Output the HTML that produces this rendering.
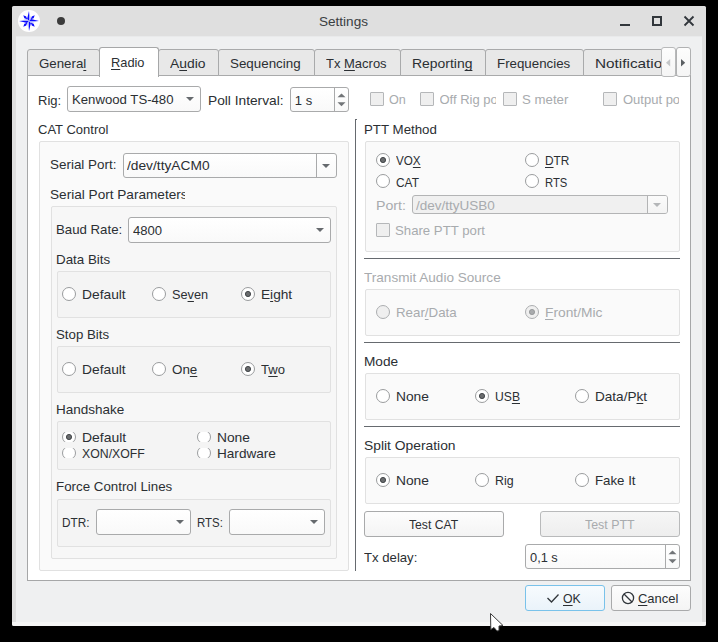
<!DOCTYPE html><html><head><meta charset="utf-8"><style>
html,body{margin:0;padding:0;background:#000;width:718px;height:642px;overflow:hidden}
.b{position:absolute;box-sizing:border-box}
svg.b{overflow:visible}
.t{position:absolute;font-family:"Liberation Sans",sans-serif;font-size:13px;line-height:15px;white-space:nowrap}
u{text-decoration:underline;text-underline-offset:2px;text-decoration-skip-ink:none}
</style></head><body>
<div class="b" style="left:12px;top:6px;width:694px;height:620px;background:#dfdfdf;border-radius:1.5px;"></div>
<div class="b" style="left:12px;top:622px;width:694px;height:4px;background:#f6f6f6;border-radius:0 0 3px 3px;"></div>
<div class="b" style="left:16px;top:36px;width:686px;height:586px;background:#eff0f1;"></div>
<div class="b" style="left:16px;top:36px;width:686px;height:1px;background:#e9eaeb;"></div>
<svg class="b" style="left:18px;top:10px" width="22" height="22" viewBox="0 0 22 22"><circle cx="11" cy="11" r="11" fill="#fff"/><path d="M11 1L9.1 9.1L11 11Z M21 11L12.9 9.1L11 11Z M11 21L12.9 12.9L11 11Z M1 11L9.1 12.9L11 11Z" fill="#0a0aff"/><path d="M11 1L12.9 9.1L11 11Z M21 11L12.9 12.9L11 11Z M11 21L9.1 12.9L11 11Z M1 11L9.1 9.1L11 11Z" fill="#a9aeff"/><path d="M5.3 5.3L8.2 6.4L9.2 9.2L6.4 8.2Z M16.7 5.3L15.6 8.2L12.8 9.2L13.8 6.4Z M16.7 16.7L13.8 15.6L12.8 12.8L15.6 13.8Z M5.3 16.7L6.4 13.8L9.2 12.8L8.2 15.6Z" fill="#0a0aff"/></svg>
<div class="b" style="left:57px;top:17px;width:8px;height:8px;border-radius:50%;background:#3b3b3b"></div>
<div class="t" style="left:318.50px;top:14px;color:#3a3e42;transform:scaleX(1.0426);transform-origin:0 0;">Settings</div>
<div class="b" style="left:620px;top:24px;width:10px;height:2px;background:#31363b"></div>
<div class="b" style="left:652px;top:16px;width:10px;height:10px;border:2px solid #31363b"></div>
<svg class="b" style="left:684px;top:16px" width="10" height="10" viewBox="0 0 10 10"><path d="M0.5 0.5L9.5 9.5M9.5 0.5L0.5 9.5" stroke="#31363b" stroke-width="1.8"/></svg>
<div class="b" style="left:27px;top:75px;width:664px;height:506px;background:#ffffff;border:1px solid #a6a7a8;"></div>
<div class="b" style="left:27px;top:49px;width:73px;height:27px;background:#e8e8e8;border:1px solid #a9aaab;border-radius:3px 3px 0 0;"></div>
<div class="b" style="left:158px;top:49px;width:61px;height:27px;background:#e8e8e8;border:1px solid #a9aaab;border-radius:3px 3px 0 0;"></div>
<div class="b" style="left:218px;top:49px;width:97px;height:27px;background:#e8e8e8;border:1px solid #a9aaab;border-radius:3px 3px 0 0;"></div>
<div class="b" style="left:314px;top:49px;width:87px;height:27px;background:#e8e8e8;border:1px solid #a9aaab;border-radius:3px 3px 0 0;"></div>
<div class="b" style="left:400px;top:49px;width:86px;height:27px;background:#e8e8e8;border:1px solid #a9aaab;border-radius:3px 3px 0 0;"></div>
<div class="b" style="left:485px;top:49px;width:99px;height:27px;background:#e8e8e8;border:1px solid #a9aaab;border-radius:3px 3px 0 0;"></div>
<div class="b" style="left:583px;top:49px;width:98px;height:27px;background:#e8e8e8;border:1px solid #a9aaab;border-radius:3px 3px 0 0;"></div>
<div class="t" style="left:38.89px;top:55.5px;color:#2b2f33;transform:scaleX(1.0217);transform-origin:0 0;">Genera<u>l</u></div>
<div class="b" style="left:99px;top:47px;width:60px;height:30px;background:#ffffff;border:1px solid #a6a7a8;border-radius:3px 3px 0 0;border-bottom:none;"></div>
<div class="t" style="left:111.21px;top:54.8px;color:#2b2f33;transform:scaleX(0.9853);transform-origin:0 0;"><u>R</u>adio</div>
<div class="t" style="left:170.20px;top:55.5px;color:#2b2f33;transform:scaleX(1.0697);transform-origin:0 0;">A<u>u</u>dio</div>
<div class="t" style="left:230.00px;top:55.5px;color:#2b2f33;transform:scaleX(1.0290);transform-origin:0 0;">Sequencing</div>
<div class="t" style="left:326.40px;top:55.5px;color:#2b2f33;transform:scaleX(0.9984);transform-origin:0 0;">Tx <u>M</u>acros</div>
<div class="t" style="left:412.00px;top:55.5px;color:#2b2f33;transform:scaleX(1.0714);transform-origin:0 0;">Reportin<u>g</u></div>
<div class="t" style="left:497.09px;top:55.5px;color:#2b2f33;transform:scaleX(1.0239);transform-origin:0 0;">Frequencies</div>
<div class="t" style="left:594.81px;top:55.5px;color:#2b2f33;width:56.17px;overflow:hidden;transform:scaleX(1.1785);transform-origin:0 0;">Notifications</div>
<div class="b" style="left:661px;top:40px;width:41px;height:35px;background:#eff0f1;"></div>
<div class="b" style="left:661px;top:47px;width:15px;height:30px;background:linear-gradient(#fdfdfd,#f5f5f5);border:1px solid #b8b9ba;border-radius:3px;"></div>
<div class="b" style="left:676px;top:47px;width:15px;height:30px;background:linear-gradient(#fdfdfd,#f5f5f5);border:1px solid #b0b1b2;border-radius:3px;"></div>
<svg class="b" style="left:666px;top:58.5px" width="4.2" height="7.5"><path d="M4.2 0V7.5L0 3.75Z" fill="#c4c6c8"/></svg>
<svg class="b" style="left:681px;top:58.5px" width="4.2" height="7.5"><path d="M0 0V7.5L4.2 3.75Z" fill="#5b5f63"/></svg>
<div class="b" style="left:690px;top:76px;width:1px;height:505px;background:#a6a7a8;"></div>
<div class="t" style="left:38.00px;top:92.5px;color:#2b2f33;transform:scaleX(1.0000);transform-origin:0 0;">Rig:</div>
<div class="b" style="left:67px;top:86px;width:134px;height:26px;background:linear-gradient(#ffffff,#f9f9f9);border:1px solid #a9aaab;border-radius:3px;"></div>
<svg class="b" style="left:185.5px;top:97.0px" width="8" height="4" viewBox="0 0 8 4"><path d="M0 0H8L4.0 4Z" fill="#666a6e"/></svg>
<div class="t" style="left:71.90px;top:91.6px;color:#2b2f33;transform:scaleX(1.0130);transform-origin:0 0;">Kenwood TS-480</div>
<div class="t" style="left:207.80px;top:92.5px;color:#2b2f33;transform:scaleX(1.0563);transform-origin:0 0;">Poll Interval:</div>
<div class="b" style="left:290px;top:87px;width:59px;height:25px;background:linear-gradient(#ffffff,#f9f9f9);border:1px solid #a9aaab;border-radius:3px;"></div>
<div class="b" style="left:334px;top:88px;width:1px;height:23px;background:#a9aaab"></div>
<div class="t" style="left:294.80px;top:92.5px;color:#2b2f33;transform:scaleX(1.0000);transform-origin:0 0;">1 s</div>
<svg class="b" style="left:337.0px;top:92.5px" width="9" height="14"><path d="M0.5 4.3L4.5 0.5L8.5 4.3Z M0.5 9.3L8.5 9.3L4.5 13.3Z" fill="#727578"/></svg>
<div class="b" style="left:370px;top:92px;width:14px;height:14px;background:#efefef;border:1px solid #b5b7b9;border-radius:1px;"></div>
<div class="t" style="left:389.21px;top:91.7px;color:#a8abae;transform:scaleX(0.9706);transform-origin:0 0;">On</div>
<div class="b" style="left:420px;top:92px;width:14px;height:14px;background:#efefef;border:1px solid #b5b7b9;border-radius:1px;"></div>
<div class="t" style="left:439.50px;top:91.7px;color:#a8abae;width:56.5px;overflow:hidden;">Off Rig port</div>
<div class="b" style="left:503px;top:92px;width:14px;height:14px;background:#efefef;border:1px solid #b5b7b9;border-radius:1px;"></div>
<div class="t" style="left:522.09px;top:91.7px;color:#a8abae;transform:scaleX(1.0178);transform-origin:0 0;">S meter</div>
<div class="b" style="left:603px;top:92px;width:14px;height:14px;background:#efefef;border:1px solid #b5b7b9;border-radius:1px;"></div>
<div class="t" style="left:623.00px;top:91.7px;color:#a8abae;width:55.5px;overflow:hidden;">Output power</div>
<div class="t" style="left:38.10px;top:121.80000000000001px;color:#2b2f33;transform:scaleX(1.0014);transform-origin:0 0;">CAT Control</div>
<div class="b" style="left:39px;top:141px;width:310px;height:430px;background:#fafafa;border:1px solid #e1e1e1;border-radius:2px;"></div>
<div class="t" style="left:50.08px;top:157.3px;color:#2b2f33;transform:scaleX(1.0333);transform-origin:0 0;">Serial Port:</div>
<div class="b" style="left:123px;top:153px;width:214px;height:25px;background:linear-gradient(#ffffff,#f9f9f9);border:1px solid #a9aaab;border-radius:3px;"></div>
<div class="b" style="left:316px;top:154px;width:1px;height:23px;background:#a9aaab"></div>
<svg class="b" style="left:321.5px;top:163.5px" width="8" height="4" viewBox="0 0 8 4"><path d="M0 0H8L4.0 4Z" fill="#666a6e"/></svg>
<div class="t" style="left:127.00px;top:158px;color:#2b2f33;transform:scaleX(1.0577);transform-origin:0 0;">/dev/ttyACM0</div>
<div class="t" style="left:49.88px;top:186.8px;color:#2b2f33;width:129.11px;overflow:hidden;transform:scaleX(1.0466);transform-origin:0 0;">Serial Port Parameters</div>
<div class="b" style="left:51px;top:206px;width:286px;height:353px;background:#f7f7f7;border:1px solid #e1e1e1;border-radius:2px;"></div>
<div class="t" style="left:55.89px;top:222.3px;color:#2b2f33;transform:scaleX(1.0172);transform-origin:0 0;">Baud Rate:</div>
<div class="b" style="left:128px;top:217px;width:203px;height:26px;background:linear-gradient(#ffffff,#f9f9f9);border:1px solid #a9aaab;border-radius:3px;"></div>
<svg class="b" style="left:315.5px;top:228.0px" width="8" height="4" viewBox="0 0 8 4"><path d="M0 0H8L4.0 4Z" fill="#666a6e"/></svg>
<div class="t" style="left:133.00px;top:223px;color:#2b2f33;transform:scaleX(1.0069);transform-origin:0 0;">4800</div>
<div class="t" style="left:56.29px;top:251.8px;color:#2b2f33;transform:scaleX(1.0269);transform-origin:0 0;">Data Bits</div>
<div class="b" style="left:57px;top:271px;width:274px;height:47px;background:#f4f4f4;border:1px solid #e1e1e1;border-radius:2px;"></div>
<svg class="b" style="left:62px;top:287px" width="14" height="14" viewBox="0 0 14 14"><circle cx="7" cy="7" r="6.5" fill="#ffffff" stroke="#9a9c9e" stroke-width="1"/></svg>
<div class="t" style="left:81.97px;top:286.9px;color:#2b2f33;transform:scaleX(1.0610);transform-origin:0 0;">Default</div>
<svg class="b" style="left:152px;top:287px" width="14" height="14" viewBox="0 0 14 14"><circle cx="7" cy="7" r="6.5" fill="#ffffff" stroke="#9a9c9e" stroke-width="1"/></svg>
<div class="t" style="left:171.81px;top:286.9px;color:#2b2f33;transform:scaleX(0.9778);transform-origin:0 0;">Se<u>v</u>en</div>
<svg class="b" style="left:241px;top:287px" width="14" height="14" viewBox="0 0 14 14"><circle cx="7" cy="7" r="6.5" fill="#ffffff" stroke="#9a9c9e" stroke-width="1"/><circle cx="7" cy="7" r="2.6" fill="#6a6c6e" stroke="#393c3f" stroke-width="0.9"/></svg>
<div class="t" style="left:260.97px;top:286.9px;color:#2b2f33;transform:scaleX(1.0517);transform-origin:0 0;">E<u>i</u>ght</div>
<div class="t" style="left:55.89px;top:326.8px;color:#2b2f33;transform:scaleX(1.0192);transform-origin:0 0;">Stop Bits</div>
<div class="b" style="left:57px;top:346px;width:274px;height:47px;background:#f4f4f4;border:1px solid #e1e1e1;border-radius:2px;"></div>
<svg class="b" style="left:62px;top:362px" width="14" height="14" viewBox="0 0 14 14"><circle cx="7" cy="7" r="6.5" fill="#ffffff" stroke="#9a9c9e" stroke-width="1"/></svg>
<div class="t" style="left:81.97px;top:361.9px;color:#2b2f33;transform:scaleX(1.0610);transform-origin:0 0;">Default</div>
<svg class="b" style="left:152px;top:362px" width="14" height="14" viewBox="0 0 14 14"><circle cx="7" cy="7" r="6.5" fill="#ffffff" stroke="#9a9c9e" stroke-width="1"/></svg>
<div class="t" style="left:171.79px;top:361.9px;color:#2b2f33;transform:scaleX(1.0292);transform-origin:0 0;">On<u>e</u></div>
<svg class="b" style="left:241px;top:362px" width="14" height="14" viewBox="0 0 14 14"><circle cx="7" cy="7" r="6.5" fill="#ffffff" stroke="#9a9c9e" stroke-width="1"/><circle cx="7" cy="7" r="2.6" fill="#6a6c6e" stroke="#393c3f" stroke-width="0.9"/></svg>
<div class="t" style="left:261.00px;top:361.9px;color:#2b2f33;transform:scaleX(1.0042);transform-origin:0 0;">T<u>w</u>o</div>
<div class="t" style="left:55.88px;top:401.8px;color:#2b2f33;transform:scaleX(1.0385);transform-origin:0 0;">Handshake</div>
<div class="b" style="left:57px;top:421px;width:274px;height:49px;background:#f4f4f4;border:1px solid #e1e1e1;border-radius:2px;"></div>
<div class="b" style="left:60px;top:432px;width:170px;height:10px;overflow:hidden"><svg style="position:absolute;left:2px;top:-2px" width="14" height="14"><circle cx="7" cy="7" r="6.5" fill="#ffffff" stroke="#9a9c9e" stroke-width="1"/><circle cx="7" cy="7" r="2.6" fill="#6a6c6e" stroke="#393c3f" stroke-width="0.9"/></svg><svg style="position:absolute;left:137px;top:-2px" width="14" height="14"><circle cx="7" cy="7" r="6.5" fill="#ffffff" stroke="#9a9c9e" stroke-width="1"/></svg></div>
<div class="b" style="left:60px;top:448px;width:170px;height:10px;overflow:hidden"><svg style="position:absolute;left:2px;top:-2px" width="14" height="14"><circle cx="7" cy="7" r="6.5" fill="#ffffff" stroke="#9a9c9e" stroke-width="1"/></svg><svg style="position:absolute;left:137px;top:-2px" width="14" height="14"><circle cx="7" cy="7" r="6.5" fill="#ffffff" stroke="#9a9c9e" stroke-width="1"/></svg></div>
<div class="t" style="left:81.96px;top:429.7px;color:#2b2f33;transform:scaleX(1.0732);transform-origin:0 0;">Default</div>
<div class="t" style="left:82.03px;top:445.7px;color:#2b2f33;transform:scaleX(0.9455);transform-origin:0 0;">XON/XOFF</div>
<div class="t" style="left:217.27px;top:429.7px;color:#2b2f33;transform:scaleX(1.0600);transform-origin:0 0;">None</div>
<div class="t" style="left:217.28px;top:445.7px;color:#2b2f33;transform:scaleX(1.0446);transform-origin:0 0;">Hardware</div>
<div class="t" style="left:55.89px;top:478.9px;color:#2b2f33;transform:scaleX(1.0248);transform-origin:0 0;">Force Control Lines</div>
<div class="b" style="left:57px;top:499px;width:274px;height:48px;background:#f4f4f4;border:1px solid #e1e1e1;border-radius:2px;"></div>
<div class="t" style="left:62.45px;top:514.8px;color:#2b2f33;transform:scaleX(0.9069);transform-origin:0 0;">DTR:</div>
<div class="b" style="left:96px;top:509px;width:95px;height:26px;background:linear-gradient(#ffffff,#f9f9f9);border:1px solid #a9aaab;border-radius:3px;"></div>
<svg class="b" style="left:175.5px;top:520.0px" width="8" height="4" viewBox="0 0 8 4"><path d="M0 0H8L4.0 4Z" fill="#666a6e"/></svg>
<div class="t" style="left:197.16px;top:514.8px;color:#2b2f33;transform:scaleX(0.8786);transform-origin:0 0;">RTS:</div>
<div class="b" style="left:229px;top:509px;width:96px;height:26px;background:linear-gradient(#ffffff,#f9f9f9);border:1px solid #a9aaab;border-radius:3px;"></div>
<svg class="b" style="left:309.5px;top:520.0px" width="8" height="4" viewBox="0 0 8 4"><path d="M0 0H8L4.0 4Z" fill="#666a6e"/></svg>
<div class="b" style="left:355px;top:119px;width:1px;height:452px;background:#666a6f;"></div>
<div class="b" style="left:355px;top:119px;width:2px;height:1px;background:#666a6f;"></div>
<div class="t" style="left:364.19px;top:121.80000000000001px;color:#2b2f33;transform:scaleX(1.0225);transform-origin:0 0;">PTT Method</div>
<div class="b" style="left:365px;top:141px;width:315px;height:111px;background:#fafafa;border:1px solid #e1e1e1;border-radius:2px;"></div>
<svg class="b" style="left:376px;top:153px" width="14" height="14" viewBox="0 0 14 14"><circle cx="7" cy="7" r="6.5" fill="#ffffff" stroke="#9a9c9e" stroke-width="1"/><circle cx="7" cy="7" r="2.6" fill="#6a6c6e" stroke="#393c3f" stroke-width="0.9"/></svg>
<div class="t" style="left:396.45px;top:152.7px;color:#2b2f33;transform:scaleX(0.8964);transform-origin:0 0;">VO<u>X</u></div>
<svg class="b" style="left:376px;top:174px" width="14" height="14" viewBox="0 0 14 14"><circle cx="7" cy="7" r="6.5" fill="#ffffff" stroke="#9a9c9e" stroke-width="1"/></svg>
<div class="t" style="left:396.34px;top:174.8px;color:#2b2f33;transform:scaleX(0.9160);transform-origin:0 0;">CAT</div>
<svg class="b" style="left:525px;top:153px" width="14" height="14" viewBox="0 0 14 14"><circle cx="7" cy="7" r="6.5" fill="#ffffff" stroke="#9a9c9e" stroke-width="1"/></svg>
<div class="t" style="left:545.24px;top:152.7px;color:#2b2f33;transform:scaleX(0.9115);transform-origin:0 0;"><u>D</u>TR</div>
<svg class="b" style="left:525px;top:174px" width="14" height="14" viewBox="0 0 14 14"><circle cx="7" cy="7" r="6.5" fill="#ffffff" stroke="#9a9c9e" stroke-width="1"/></svg>
<div class="t" style="left:545.37px;top:174.8px;color:#2b2f33;transform:scaleX(0.8640);transform-origin:0 0;">RTS</div>
<div class="t" style="left:376.26px;top:197.8px;color:#a8abae;transform:scaleX(1.0885);transform-origin:0 0;">Port:</div>
<div class="b" style="left:412px;top:195px;width:256px;height:19px;background:#f0f0f0;border:1px solid #b3b4b5;border-radius:3px;"></div>
<div class="b" style="left:648px;top:196px;width:19px;height:17px;background:linear-gradient(#fbfbfb,#f3f3f3);border-radius:0 2px 2px 0;"></div>
<div class="b" style="left:647px;top:196px;width:1px;height:17px;background:#b3b4b5"></div>
<svg class="b" style="left:652.5px;top:202.5px" width="8" height="4" viewBox="0 0 8 4"><path d="M0 0H8L4.0 4Z" fill="#b4b6b8"/></svg>
<div class="t" style="left:415.80px;top:197.8px;color:#a8abae;transform:scaleX(1.0395);transform-origin:0 0;">/dev/ttyUSB0</div>
<div class="b" style="left:376px;top:223px;width:14px;height:14px;background:#efefef;border:1px solid #b5b7b9;border-radius:1px;"></div>
<div class="t" style="left:394.79px;top:223.1px;color:#a8abae;transform:scaleX(1.0148);transform-origin:0 0;">Share PTT port</div>
<div class="b" style="left:364px;top:258px;width:316px;height:1px;background:#666a6f;"></div>
<div class="t" style="left:364.38px;top:270px;color:#a8abae;transform:scaleX(1.0431);transform-origin:0 0;">Transmit Audio Source</div>
<div class="b" style="left:365px;top:289px;width:315px;height:47px;background:#fafafa;border:1px solid #e1e1e1;border-radius:2px;"></div>
<svg class="b" style="left:376px;top:305px" width="14" height="14" viewBox="0 0 14 14"><circle cx="7" cy="7" r="6.5" fill="#efefef" stroke="#acaeb0" stroke-width="1"/></svg>
<div class="t" style="left:396.09px;top:305.2px;color:#a8abae;transform:scaleX(1.0237);transform-origin:0 0;">Rear<u>/</u>Data</div>
<svg class="b" style="left:525px;top:305px" width="14" height="14" viewBox="0 0 14 14"><circle cx="7" cy="7" r="6.5" fill="#efefef" stroke="#acaeb0" stroke-width="1"/><circle cx="7" cy="7" r="2.6" fill="#a9abad" stroke="#8e9092" stroke-width="0.8"/></svg>
<div class="t" style="left:545.17px;top:305.2px;color:#a8abae;transform:scaleX(1.0593);transform-origin:0 0;"><u>F</u>ront/Mic</div>
<div class="b" style="left:364px;top:342px;width:316px;height:1px;background:#666a6f;"></div>
<div class="t" style="left:364.38px;top:353.8px;color:#2b2f33;transform:scaleX(1.0500);transform-origin:0 0;">Mode</div>
<div class="b" style="left:365px;top:373px;width:315px;height:47px;background:#fafafa;border:1px solid #e1e1e1;border-radius:2px;"></div>
<svg class="b" style="left:376px;top:389px" width="14" height="14" viewBox="0 0 14 14"><circle cx="7" cy="7" r="6.5" fill="#ffffff" stroke="#9a9c9e" stroke-width="1"/></svg>
<div class="t" style="left:396.27px;top:388.6px;color:#2b2f33;transform:scaleX(1.0600);transform-origin:0 0;">None</div>
<svg class="b" style="left:475px;top:389px" width="14" height="14" viewBox="0 0 14 14"><circle cx="7" cy="7" r="6.5" fill="#ffffff" stroke="#9a9c9e" stroke-width="1"/><circle cx="7" cy="7" r="2.6" fill="#6a6c6e" stroke="#393c3f" stroke-width="0.9"/></svg>
<div class="t" style="left:494.83px;top:388.6px;color:#2b2f33;transform:scaleX(0.9346);transform-origin:0 0;">US<u>B</u></div>
<svg class="b" style="left:575px;top:389px" width="14" height="14" viewBox="0 0 14 14"><circle cx="7" cy="7" r="6.5" fill="#ffffff" stroke="#9a9c9e" stroke-width="1"/></svg>
<div class="t" style="left:595.28px;top:388.6px;color:#2b2f33;transform:scaleX(1.0440);transform-origin:0 0;">Data/P<u>k</u>t</div>
<div class="b" style="left:364px;top:426px;width:316px;height:1px;background:#666a6f;"></div>
<div class="t" style="left:363.97px;top:437.5px;color:#2b2f33;transform:scaleX(1.0647);transform-origin:0 0;">Split Operation</div>
<div class="b" style="left:365px;top:457px;width:315px;height:47px;background:#fafafa;border:1px solid #e1e1e1;border-radius:2px;"></div>
<svg class="b" style="left:376px;top:473px" width="14" height="14" viewBox="0 0 14 14"><circle cx="7" cy="7" r="6.5" fill="#ffffff" stroke="#9a9c9e" stroke-width="1"/><circle cx="7" cy="7" r="2.6" fill="#6a6c6e" stroke="#393c3f" stroke-width="0.9"/></svg>
<div class="t" style="left:396.27px;top:472.5px;color:#2b2f33;transform:scaleX(1.0600);transform-origin:0 0;">None</div>
<svg class="b" style="left:475px;top:473px" width="14" height="14" viewBox="0 0 14 14"><circle cx="7" cy="7" r="6.5" fill="#ffffff" stroke="#9a9c9e" stroke-width="1"/></svg>
<div class="t" style="left:495.32px;top:472.5px;color:#2b2f33;transform:scaleX(0.9526);transform-origin:0 0;">Rig</div>
<svg class="b" style="left:575px;top:473px" width="14" height="14" viewBox="0 0 14 14"><circle cx="7" cy="7" r="6.5" fill="#ffffff" stroke="#9a9c9e" stroke-width="1"/></svg>
<div class="t" style="left:595.29px;top:472.5px;color:#2b2f33;transform:scaleX(1.0205);transform-origin:0 0;">Fake It</div>
<div class="b" style="left:364px;top:511px;width:140px;height:26px;background:linear-gradient(#fdfdfd,#f4f4f4);border:1px solid #a9aaab;border-radius:3px;"></div>
<div class="t" style="left:408.90px;top:517.3px;color:#2b2f33;transform:scaleX(0.9358);transform-origin:0 0;">Test CAT</div>
<div class="b" style="left:540px;top:511px;width:140px;height:26px;background:linear-gradient(#f6f6f6,#eeeeee);border:1px solid #b9babb;border-radius:3px;"></div>
<div class="t" style="left:585.20px;top:517.3px;color:#a8abae;transform:scaleX(0.9538);transform-origin:0 0;">Test PTT</div>
<div class="t" style="left:363.59px;top:549.9px;color:#2b2f33;transform:scaleX(1.0115);transform-origin:0 0;">Tx delay:</div>
<div class="b" style="left:525px;top:544px;width:155px;height:25px;background:linear-gradient(#ffffff,#f9f9f9);border:1px solid #a9aaab;border-radius:3px;"></div>
<div class="b" style="left:665px;top:545px;width:1px;height:23px;background:#a9aaab"></div>
<div class="t" style="left:530.00px;top:549.9px;color:#2b2f33;transform:scaleX(0.9857);transform-origin:0 0;">0,1 s</div>
<svg class="b" style="left:668.0px;top:549.5px" width="9" height="14"><path d="M0.5 4.3L4.5 0.5L8.5 4.3Z M0.5 9.3L8.5 9.3L4.5 13.3Z" fill="#727578"/></svg>
<div class="b" style="left:525px;top:585px;width:80px;height:26px;background:linear-gradient(#f7fbfe,#eaf3fa);border:1px solid #79c2ea;border-radius:3px;"></div>
<svg class="b" style="left:546px;top:593px" width="14" height="11"><path d="M1.5 5L5.5 9L12.5 1.5" fill="none" stroke="#31363b" stroke-width="1.3"/></svg>
<div class="t" style="left:563.20px;top:590.8px;color:#2b2f33;transform:scaleX(0.9474);transform-origin:0 0;"><u>O</u>K</div>
<div class="b" style="left:611px;top:585px;width:80px;height:26px;background:linear-gradient(#fdfdfd,#f4f4f4);border:1px solid #a9aaab;border-radius:3px;"></div>
<svg class="b" style="left:621px;top:591px" width="14" height="14"><circle cx="7" cy="7" r="5.6" fill="none" stroke="#31363b" stroke-width="1.3"/><path d="M3 3L11 11" stroke="#31363b" stroke-width="1.3"/></svg>
<div class="t" style="left:637.70px;top:590.8px;color:#2b2f33;transform:scaleX(0.9975);transform-origin:0 0;"><u>C</u>ancel</div>
<svg class="b" style="left:490px;top:613px" width="16" height="24" viewBox="0 0 16 24"><path d="M0.5 0.5L0.8 16.5L4 14.5L7 18L9 17.5L9 13L13 12.5Z" fill="#fff" stroke="#3a3a3a" stroke-width="1" stroke-linejoin="round"/></svg>
</body></html>
